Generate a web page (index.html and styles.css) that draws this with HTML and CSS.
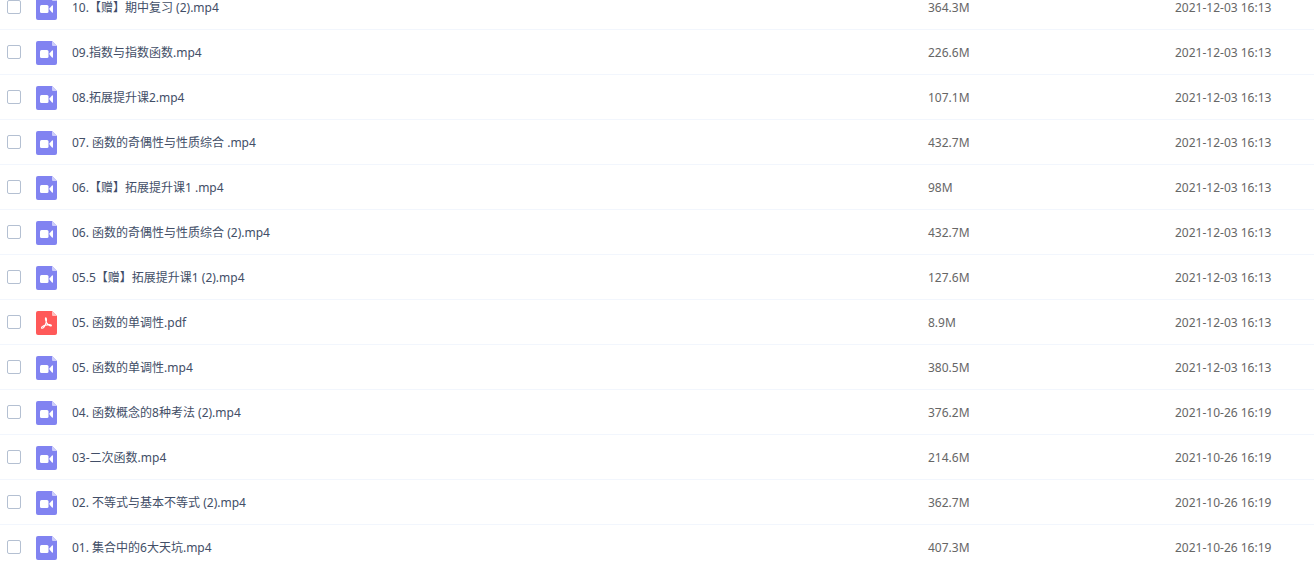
FILE: index.html
```
<!DOCTYPE html>
<html lang="zh-CN">
<head>
<meta charset="utf-8">
<title>文件列表</title>
<link rel="stylesheet" href="styles.css">
</head>
<body>
<svg class="sprite" aria-hidden="true">
  <symbol id="video" viewBox="0 0 21 24">
    <path fill="#8183f1" d="M2 0h14l5 5v17a2 2 0 0 1-2 2H2a2 2 0 0 1-2-2V2a2 2 0 0 1 2-2z"/>
    <path fill="#cdcdfa" d="M16 0l5 5h-4a1 1 0 0 1-1-1z"/>
    <rect x="4" y="9" width="8.500" height="8" rx="1.500" fill="#fff"/>
    <path fill="#fff" d="M13.600 12.300L16 9.500q1-.6 1 .5v6q0 1.100-1 .5l-2.400-2.800z"/>
  </symbol>
  <symbol id="pdf" viewBox="0 0 21 24">
    <path fill="#ff5959" d="M2 0h14l5 5v17a2 2 0 0 1-2 2H2a2 2 0 0 1-2-2V2a2 2 0 0 1 2-2z"/>
    <path fill="#ffc0c0" d="M16 0l5 5h-4a1 1 0 0 1-1-1z"/>
    <path fill="none" stroke="#fff" stroke-width="1.100" stroke-linecap="round" stroke-linejoin="round" d="M9.500 6.800c1.500 0 1.100 3 .5 5-1 3-3 5.700-4.200 5.500-1-.8 1-2.500 3.700-3.200 3-.8 6.200-.7 5.900.5-1 1.200-4.500-1.300-5.400-4.300-.5-1.500-.8-3.200-.5-3.500z"/>
  </symbol>
</svg>
<table class="files"><tbody id="rows"></tbody></table>
<script src="files.js"></script>
</body>
</html>
```
FILE: styles.css
```
body {
  margin: 0;
  overflow: hidden;
  background: #fff;
  font: 12px/18px "Noto Sans", "Noto Sans CJK SC", sans-serif;
  color: #424e67;
}
.sprite { display: none; }
.files {
  width: 100%;
  margin-top: -15px;
  border-collapse: separate;
  border-spacing: 0;
  table-layout: fixed;
}
.files td {
  box-sizing: border-box;
  height: 45px;
  padding: 2px 0 0;
  border-bottom: 1px solid #f2f6fd;
  white-space: nowrap;
}
.files .pick { width: 36px; padding-top: 0; }
.files .kind { width: 36px; }
.files .size { width: 247px; color: #666; }
.files .date { width: 139px; color: #666; }
.check {
  appearance: none;
  display: block;
  box-sizing: border-box;
  width: 14px;
  height: 14px;
  margin: 0 0 0 7px;
  border: 1px solid #b4c0d2;
  border-radius: 2px;
  background: #fff;
}
.check:checked { background: #06a7ff; }
.icon { display: block; width: 21px; height: 24px; }
```
FILE: files.js
```
const files = [
  ["10.【赠】期中复习 (2).mp4", "364.3M", "2021-12-03 16:13"],
  ["09.指数与指数函数.mp4", "226.6M", "2021-12-03 16:13"],
  ["08.拓展提升课2.mp4", "107.1M", "2021-12-03 16:13"],
  ["07. 函数的奇偶性与性质综合 .mp4", "432.7M", "2021-12-03 16:13"],
  ["06.【赠】拓展提升课1 .mp4", "98M", "2021-12-03 16:13"],
  ["06. 函数的奇偶性与性质综合 (2).mp4", "432.7M", "2021-12-03 16:13"],
  ["05.5【赠】拓展提升课1 (2).mp4", "127.6M", "2021-12-03 16:13"],
  ["05. 函数的单调性.pdf", "8.9M", "2021-12-03 16:13"],
  ["05. 函数的单调性.mp4", "380.5M", "2021-12-03 16:13"],
  ["04. 函数概念的8种考法 (2).mp4", "376.2M", "2021-10-26 16:19"],
  ["03-二次函数.mp4", "214.6M", "2021-10-26 16:19"],
  ["02. 不等式与基本不等式 (2).mp4", "362.7M", "2021-10-26 16:19"],
  ["01. 集合中的6大天坑.mp4", "407.3M", "2021-10-26 16:19"]
];
document.getElementById("rows").innerHTML = files.map(([name, size, date], i) => `
  <tr>
    <td class="pick"><input class="check" type="checkbox" id="f${i}"></td>
    <td class="kind"><svg class="icon" aria-hidden="true"><use href="#${name.endsWith("pdf") ? "pdf" : "video"}"/></svg></td>
    <td class="name"><label for="f${i}">${name}</label></td>
    <td class="size">${size}</td>
    <td class="date">${date}</td>
  </tr>`).join("");
```
